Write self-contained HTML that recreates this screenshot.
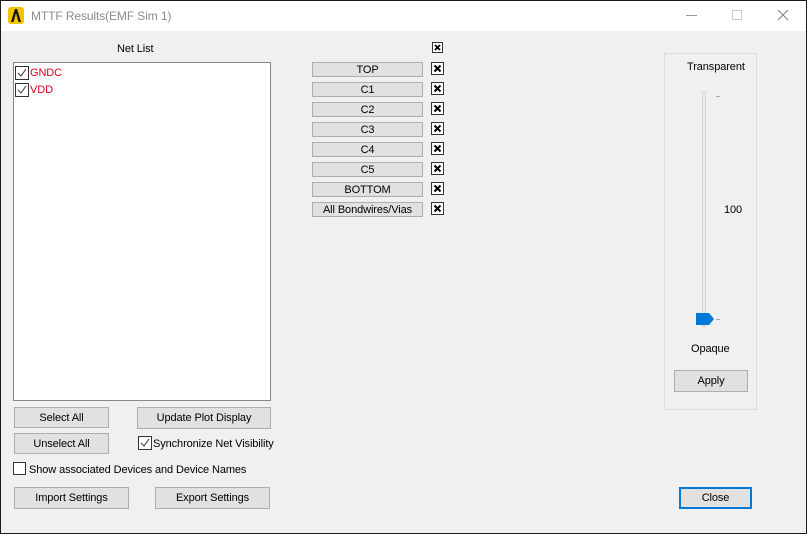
<!DOCTYPE html>
<html><head><style>
*{margin:0;padding:0;box-sizing:border-box}
body{width:807px;height:534px;overflow:hidden;background:#f0f0f0;font-family:"Liberation Sans",sans-serif;font-size:11px;color:#000;position:relative}
.win{position:absolute;left:0;top:0;width:807px;height:534px;border:1px solid #1a1a1a;z-index:9;pointer-events:none}
.title{position:absolute;left:0;top:0;width:807px;height:31px;background:#fff}
.a{position:absolute;white-space:nowrap}
.t{font-size:11px;letter-spacing:-0.1px}
.btn{position:absolute;background:#e1e1e1;border:1px solid #adadad;text-align:center;font-size:11px;letter-spacing:-0.1px;line-height:21px;white-space:nowrap}
.lb{position:absolute;background:#e1e1e1;border:1px solid #adadad;text-align:center;font-size:11px;letter-spacing:-0.1px;line-height:14px;height:15px;left:312px;width:111px;white-space:nowrap}
.cb{position:absolute;width:13px;height:13px;border:1px solid #333;background:#fff}
</style></head><body>
<div class="title">
 <svg class="a" style="left:8px;top:7px" width="16" height="17" viewBox="0 0 16 17"><rect x="0" y="0" width="16" height="17" rx="3" fill="#f5c400"/><path d="M3 15 L7 2 L9 2 L13 15 L10.5 15 L8 6 L5.5 15Z" fill="#111"/></svg>
 <div class="a" style="left:31px;top:9px;font-size:12px;color:#8c8c8c;letter-spacing:-0.1px">MTTF Results(EMF Sim 1)</div>
 <div class="a" style="left:686px;top:15px;width:11px;height:1px;background:#999"></div>
 <div class="a" style="left:732px;top:10px;width:10px;height:10px;border:1px solid #ccc"></div>
 <svg class="a" style="left:777px;top:9px" width="12" height="12"><path d="M1 1L11 11M11 1L1 11" stroke="#888" stroke-width="1.2"/></svg>
</div>

<div class="a t" style="left:117px;top:43px">Net List</div>
<div class="a" style="left:13px;top:62px;width:258px;height:339px;background:#fff;border:1px solid #828790"></div>
<svg class="a" style="left:15px;top:66px" width="14" height="14"><rect x="0.5" y="0.5" width="13" height="13" fill="#fff" stroke="#333"/><path d="M3 7L6 10L11 3" stroke="#333" fill="none"/></svg>
<div class="a t" style="left:30px;top:67px;color:#e0001b">GNDC</div>
<svg class="a" style="left:15px;top:83px" width="14" height="14"><rect x="0.5" y="0.5" width="13" height="13" fill="#fff" stroke="#333"/><path d="M3 7L6 10L11 3" stroke="#333" fill="none"/></svg>
<div class="a t" style="left:30px;top:84px;color:#e0001b">VDD</div>

<div class="btn" style="left:14px;top:407px;width:95px;height:21px;line-height:20px">Select All</div>
<div class="btn" style="left:137px;top:407px;width:134px;height:22px">Update Plot Display</div>
<div class="btn" style="left:14px;top:433px;width:95px;height:21px;line-height:20px">Unselect All</div>
<svg class="a" style="left:138px;top:436px" width="14" height="14"><rect x="0.5" y="0.5" width="13" height="13" fill="#fff" stroke="#333"/><path d="M3 7L6 10L11 3" stroke="#333" fill="none"/></svg>
<div class="a t" style="left:153px;top:438px">Synchronize Net Visibility</div>
<div class="cb" style="left:13px;top:462px"></div>
<div class="a t" style="left:29px;top:464px">Show associated Devices and Device Names</div>
<div class="btn" style="left:14px;top:487px;width:115px;height:22px">Import Settings</div>
<div class="btn" style="left:155px;top:487px;width:115px;height:22px">Export Settings</div>
<div class="btn" style="left:679px;top:487px;width:73px;height:22px;border:2px solid #0078d7;line-height:19px">Close</div>

<svg class="a" style="left:432px;top:42px" width="11" height="11"><rect x="0.5" y="0.5" width="10" height="10" fill="#fff" stroke="#333"/><path d="M3 3L8 8M8 3L3 8" stroke="#000" stroke-width="1.8"/></svg>
<div class="lb" style="top:62px">TOP</div>
<div class="lb" style="top:82px">C1</div>
<div class="lb" style="top:102px">C2</div>
<div class="lb" style="top:122px">C3</div>
<div class="lb" style="top:142px">C4</div>
<div class="lb" style="top:162px">C5</div>
<div class="lb" style="top:182px">BOTTOM</div>
<div class="lb" style="top:202px">All Bondwires/Vias</div>
<svg class="a" style="left:431px;top:62px" width="14" height="160">
<defs><g id="x"><rect x="0.5" y="0.5" width="12" height="12" fill="#fff" stroke="#333"/><path d="M3.5 3.5L9.5 9.5M9.5 3.5L3.5 9.5" stroke="#000" stroke-width="2"/></g></defs>
<use href="#x" y="0"/><use href="#x" y="20"/><use href="#x" y="40"/><use href="#x" y="60"/><use href="#x" y="80"/><use href="#x" y="100"/><use href="#x" y="120"/><use href="#x" y="140"/>
</svg>

<div class="a" style="left:664px;top:53px;width:93px;height:357px;border:1px solid #dcdcdc"></div>
<div class="a t" style="left:687px;top:61px">Transparent</div>
<div class="a" style="left:702px;top:91px;width:4px;height:236px;background:#e7eaea;border:1px solid #d6d6d6"></div>
<div class="a" style="left:716px;top:96px;width:4px;height:1px;background:#aaa"></div>
<div class="a" style="left:716px;top:319px;width:4px;height:1px;background:#aaa"></div>
<svg class="a" style="left:696px;top:313px" width="19" height="12"><path d="M0 0H13L18 6L13 12H0Z" fill="#0078d7"/></svg>
<div class="a t" style="left:724px;top:204px">100</div>
<div class="a t" style="left:691px;top:343px">Opaque</div>
<div class="btn" style="left:674px;top:370px;width:74px;height:22px">Apply</div>
<div class="win"></div>
</body></html>
